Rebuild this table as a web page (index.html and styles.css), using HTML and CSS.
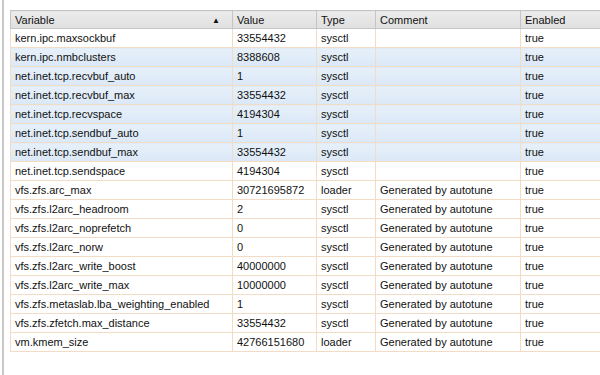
FILE: index.html
```html
<!DOCTYPE html>
<html lang="en">
<head>
    <meta charset="UTF-8">
    <title>Tunables</title>
    <link rel="stylesheet" href="styles.css">
</head>
<body>
    <div class="panel">
        <table class="grid">
            <thead>
                <tr>
                    <th class="col-var">Variable <span class="sort">&#9650;</span></th>
                    <th class="col-value">Value</th>
                    <th class="col-type">Type</th>
                    <th class="col-comment">Comment</th>
                    <th class="col-enabled">Enabled</th>
                </tr>
            </thead>
            <tbody>
                <tr><td>kern.ipc.maxsockbuf</td><td>33554432</td><td>sysctl</td><td></td><td>true</td></tr>
                <tr class="selected"><td>kern.ipc.nmbclusters</td><td>8388608</td><td>sysctl</td><td></td><td>true</td></tr>
                <tr class="selected"><td>net.inet.tcp.recvbuf_auto</td><td>1</td><td>sysctl</td><td></td><td>true</td></tr>
                <tr class="selected"><td>net.inet.tcp.recvbuf_max</td><td>33554432</td><td>sysctl</td><td></td><td>true</td></tr>
                <tr class="selected"><td>net.inet.tcp.recvspace</td><td>4194304</td><td>sysctl</td><td></td><td>true</td></tr>
                <tr class="selected"><td>net.inet.tcp.sendbuf_auto</td><td>1</td><td>sysctl</td><td></td><td>true</td></tr>
                <tr class="selected"><td>net.inet.tcp.sendbuf_max</td><td>33554432</td><td>sysctl</td><td></td><td>true</td></tr>
                <tr><td>net.inet.tcp.sendspace</td><td>4194304</td><td>sysctl</td><td></td><td>true</td></tr>
                <tr><td>vfs.zfs.arc_max</td><td>30721695872</td><td>loader</td><td>Generated by autotune</td><td>true</td></tr>
                <tr><td>vfs.zfs.l2arc_headroom</td><td>2</td><td>sysctl</td><td>Generated by autotune</td><td>true</td></tr>
                <tr><td>vfs.zfs.l2arc_noprefetch</td><td>0</td><td>sysctl</td><td>Generated by autotune</td><td>true</td></tr>
                <tr><td>vfs.zfs.l2arc_norw</td><td>0</td><td>sysctl</td><td>Generated by autotune</td><td>true</td></tr>
                <tr><td>vfs.zfs.l2arc_write_boost</td><td>40000000</td><td>sysctl</td><td>Generated by autotune</td><td>true</td></tr>
                <tr><td>vfs.zfs.l2arc_write_max</td><td>10000000</td><td>sysctl</td><td>Generated by autotune</td><td>true</td></tr>
                <tr><td>vfs.zfs.metaslab.lba_weighting_enabled</td><td>1</td><td>sysctl</td><td>Generated by autotune</td><td>true</td></tr>
                <tr><td>vfs.zfs.zfetch.max_distance</td><td>33554432</td><td>sysctl</td><td>Generated by autotune</td><td>true</td></tr>
                <tr><td>vm.kmem_size</td><td>42766151680</td><td>loader</td><td>Generated by autotune</td><td>true</td></tr>
            </tbody>
        </table>
    </div>
</body>
</html>
```

FILE: styles.css
```css
html, body {
    margin: 0;
    padding: 0;
    background-color: #FFFFFF;
    overflow: hidden;
}

body {
    font-family: "Liberation Sans", Arial, sans-serif;
    font-size: 11px;
    color: #111111;
    height: 375px;
}

.panel {
    margin-left: 2px;
    height: 375px;
    border-left: 2px solid #c8c8c8;
    padding: 10px 0 0 6px;
    box-sizing: border-box;
    overflow: hidden;
}

.grid {
    border-collapse: collapse;
    table-layout: fixed;
    width: 620px;
}

.grid th {
    height: 17px;
    padding: 0 4px;
    text-align: left;
    font-weight: normal;
    background: linear-gradient(#ebebeb, #e0e0e0);
    border: 1px solid #c4c4c4;
    white-space: nowrap;
    position: relative;
}

.col-var { width: 213px; }
.col-value { width: 75px; }
.col-type { width: 50px; }
.col-comment { width: 136px; }
.col-enabled { width: 130px; }

.sort {
    position: absolute;
    right: 12px;
    top: 5px;
    font-size: 8px;
    color: #111;
}

.grid td {
    height: 18px;
    padding: 0 4px;
    border: 1px solid #f2dcc6;
    white-space: nowrap;
    overflow: hidden;
}

.grid tr.selected td {
    background: linear-gradient(#e6f0fa, #dbe8f6);
}
```
